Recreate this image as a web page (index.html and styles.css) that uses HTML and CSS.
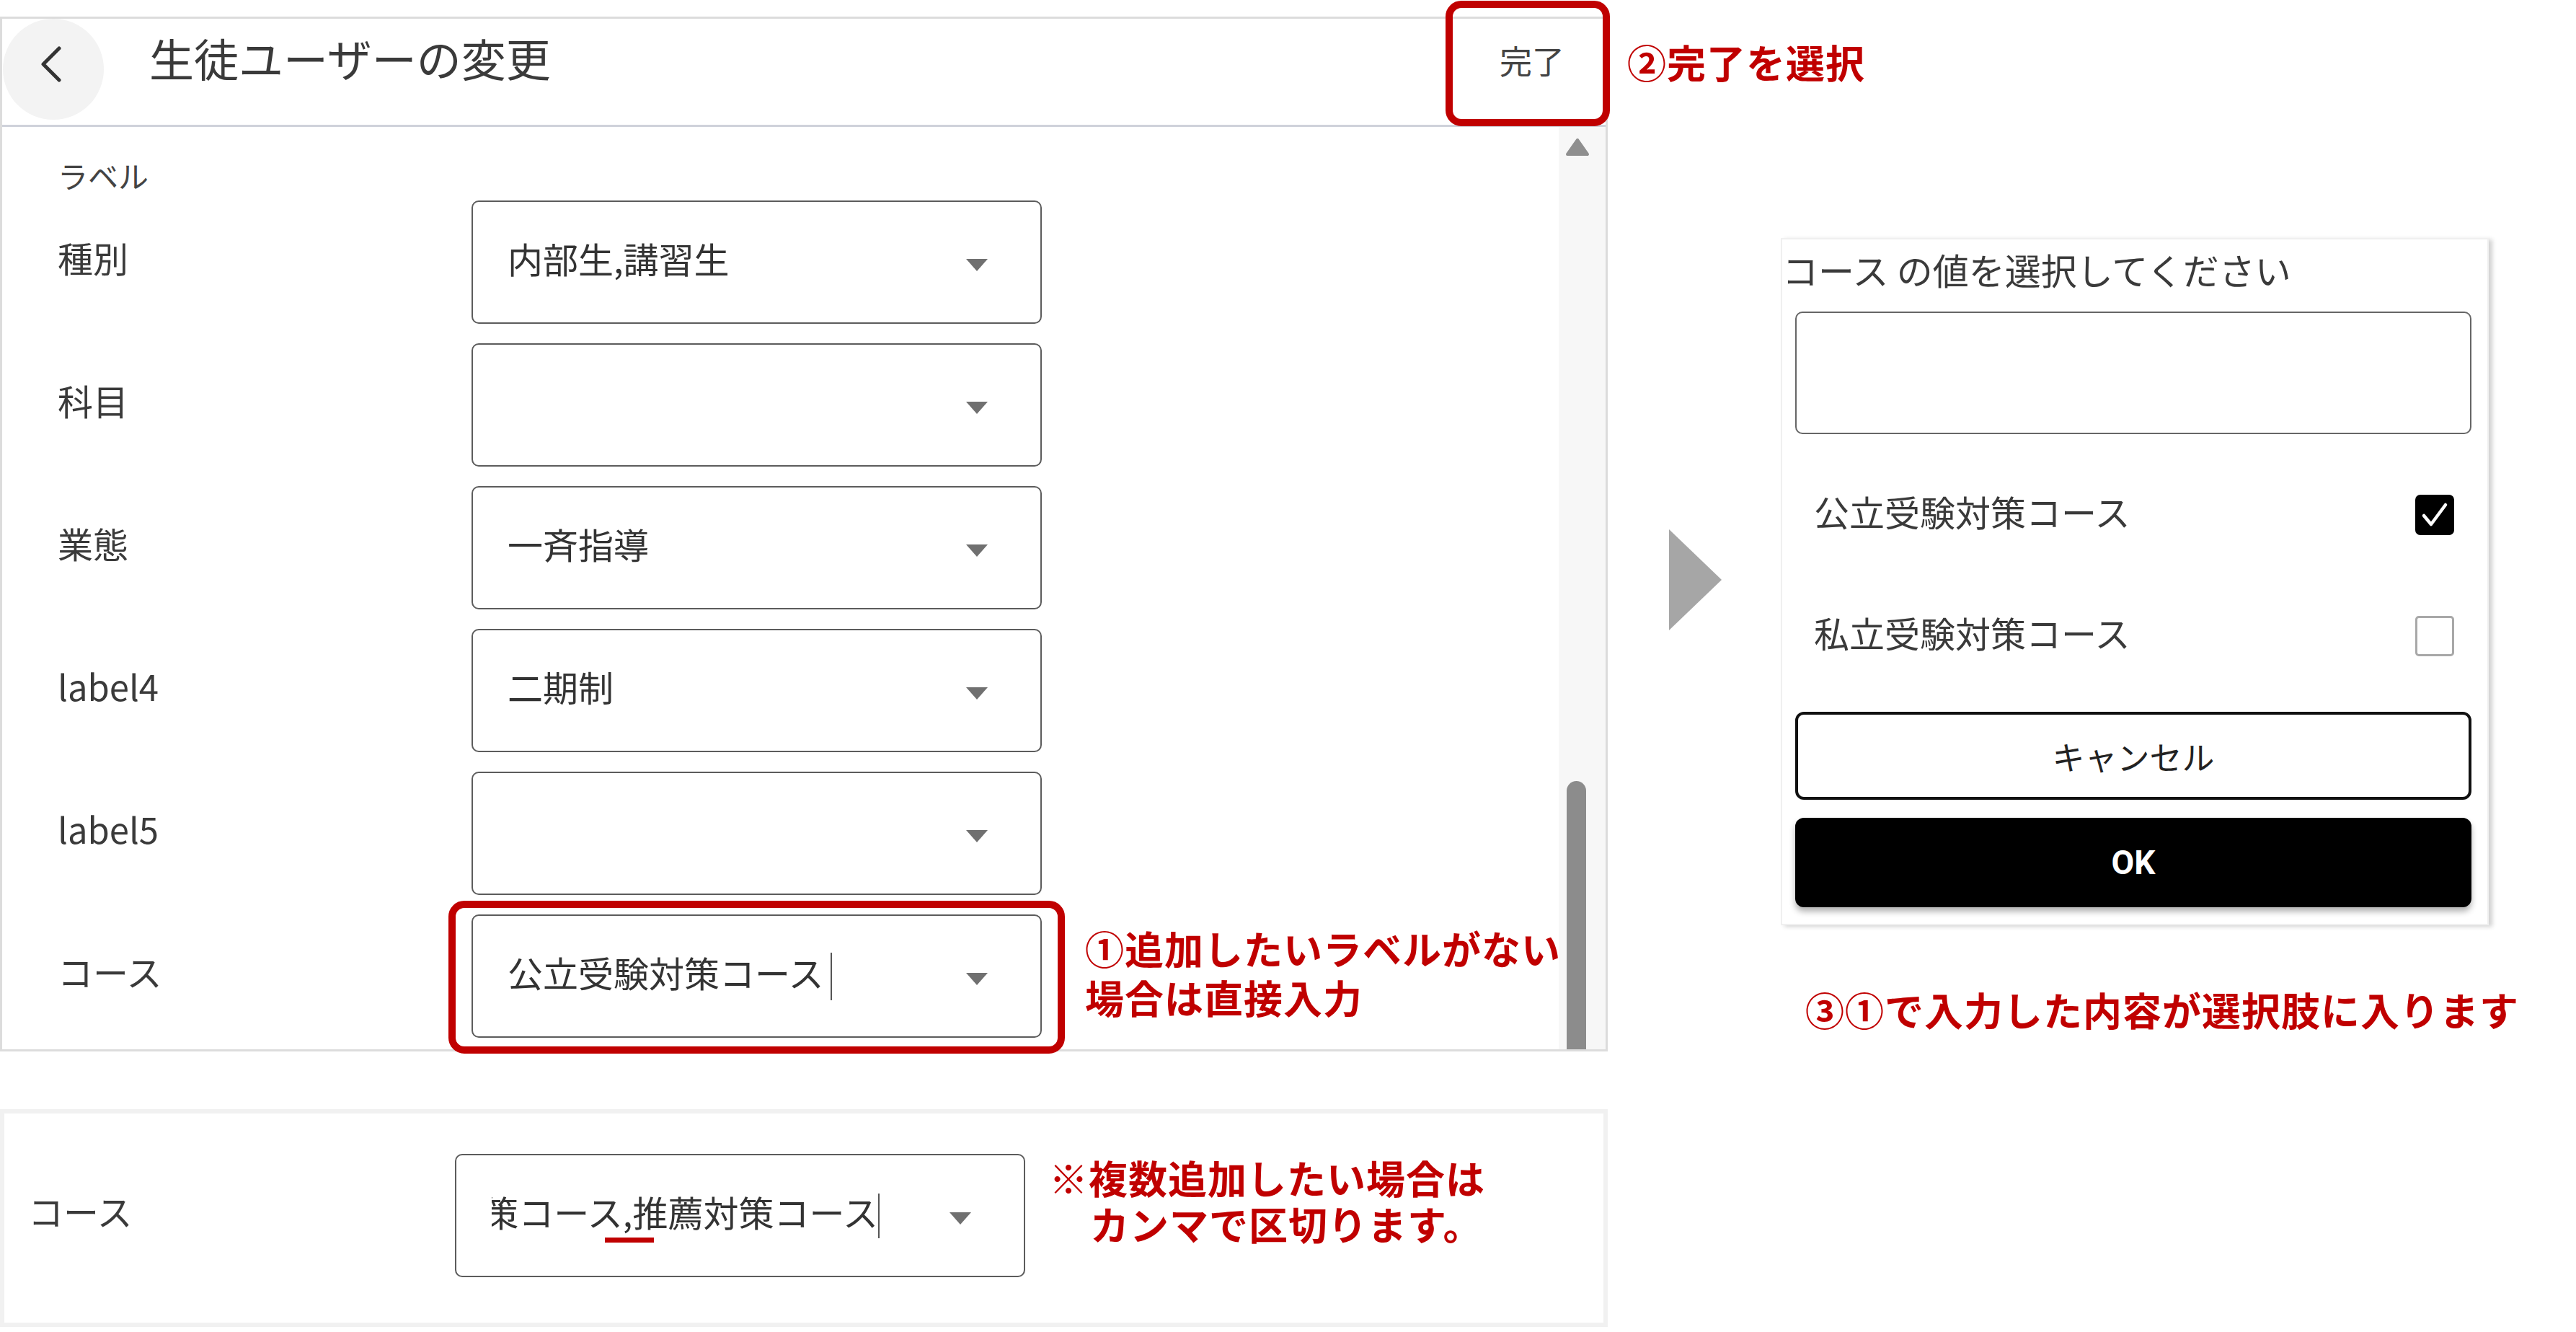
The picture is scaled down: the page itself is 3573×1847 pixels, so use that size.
FILE: index.html
```html
<!DOCTYPE html>
<html lang="ja">
<head>
  <meta charset="UTF-8" />
  <meta name="viewport" content="width=device-width, initial-scale=1.0" />
  <title>生徒ユーザーの変更</title>
  <link rel="stylesheet" href="styles.css">
</head>
<body>
  <div class="page">
    <div class="left">
      <section class="phone">
        <header class="app-bar">
          <div class="back">
            <svg width="32" height="50" viewBox="0 0 32 50"><polyline points="27,3 5,25 27,47" fill="none" stroke="#333" stroke-width="5" stroke-linecap="round" stroke-linejoin="round"/></svg>
          </div>
          <h1 class="app-title">生徒ユーザーの変更</h1>
          <span class="done">完了</span>
        </header>
        <div class="app-body">
          <div class="form">
            <div class="group-title">ラベル</div>
            <div class="field">
              <span class="field-label">種別</span>
              <div class="select"><span class="value">内部生,講習生</span><span class="caret"></span></div>
            </div>
            <div class="field">
              <span class="field-label">科目</span>
              <div class="select"><span class="value"></span><span class="caret"></span></div>
            </div>
            <div class="field">
              <span class="field-label">業態</span>
              <div class="select"><span class="value">一斉指導</span><span class="caret"></span></div>
            </div>
            <div class="field">
              <span class="field-label">label4</span>
              <div class="select"><span class="value">二期制</span><span class="caret"></span></div>
            </div>
            <div class="field">
              <span class="field-label">label5</span>
              <div class="select"><span class="value"></span><span class="caret"></span></div>
            </div>
            <div class="field">
              <span class="field-label">コース</span>
              <div class="select"><span class="value">公立受験対策コース<i class="cursor"></i></span><span class="caret"></span></div>
            </div>
          </div>
          <div class="scrollbar">
            <svg class="scroll-up" width="34" height="26" viewBox="0 0 34 26"><polygon points="17,3 31,23 3,23" fill="#8f8f8f" stroke="#8f8f8f" stroke-width="4" stroke-linejoin="round"/></svg>
            <span class="scroll-thumb"></span>
          </div>
        </div>
      </section>

      <section class="phone phone-strip">
        <div class="field">
          <span class="field-label">コース</span>
          <div class="select">
            <span class="value value-tail"><span>公立受験対策コース,推薦対策コース</span><i class="cursor cursor-short"></i></span>
            <span class="caret"></span>
            <span class="ime-mark"></span>
          </div>
        </div>
      </section>

      <div class="callout-box callout-done"></div>
      <div class="callout-box callout-course"></div>
      <p class="note note-done">②完了を選択</p>
      <p class="note note-input">①追加したいラベルがない<br>場合は直接入力</p>
      <p class="note note-multi"><span>※複数追加したい場合は</span><span class="indent">カンマで区切ります。</span></p>
    </div>

    <div class="flow-arrow"></div>

    <div class="right">
      <div class="dialog">
        <div class="dialog-title">コース の値を選択してください</div>
        <div class="dialog-input"></div>
        <ul class="options">
          <li class="option">
            <span>公立受験対策コース</span>
            <span class="check checked">
              <svg width="54" height="56" viewBox="0 0 54 56"><polyline points="12,29 22,41 42,14" fill="none" stroke="#fff" stroke-width="4.5" stroke-linecap="round" stroke-linejoin="round"/></svg>
            </span>
          </li>
          <li class="option">
            <span>私立受験対策コース</span>
            <span class="check"></span>
          </li>
        </ul>
        <div class="btn btn-cancel">キャンセル</div>
        <div class="btn btn-ok">OK</div>
      </div>
      <p class="note note-result">③①で入力した内容が選択肢に入ります</p>
    </div>
  </div>
</body>
</html>
```

FILE: styles.css
```css
body {
  margin: 0;
  background: #fff;
  font-family: "Noto Sans CJK JP", "Noto Sans", sans-serif;
  color: #333;
}
.page {
  display: flex;
  align-items: flex-start;
  width: 3573px;
  height: 1847px;
  overflow: hidden;
}
.left {
  position: relative;
  flex: none;
  width: 2230px;
  padding-top: 23px;
}

/* app screen */
.phone {
  box-sizing: border-box;
  width: 2230px;
  height: 1435px;
  border: 3px solid #dcdcdc;
  background: #fff;
  display: flex;
  flex-direction: column;
}
.app-bar {
  display: flex;
  align-items: flex-start;
  height: 147px;
  flex: none;
  border-bottom: 3px solid #cfd2da;
}
.back {
  box-sizing: border-box;
  width: 140px;
  height: 140px;
  margin-left: 1px;
  border-radius: 50%;
  background: #f3f3f3;
  display: flex;
  align-items: center;
  justify-content: center;
  padding: 0 6px 14px 0;
}
.app-title {
  margin: 23px 0 0 63px;
  font-size: 62px;
  font-weight: 400;
  line-height: 1;
  color: #3a3a3a;
}
.done {
  margin: 35px 57px 0 auto;
  font-size: 45px;
  line-height: 1;
  color: #444;
}
.app-body {
  flex: 1;
  display: flex;
  min-height: 0;
}
.form {
  flex: 1;
  display: flex;
  flex-direction: column;
  gap: 27px;
  padding: 46px 0 0 77px;
}
.group-title {
  font-size: 42px;
  line-height: 1;
  color: #444;
  margin-bottom: -13px;
}
.field {
  display: flex;
  align-items: center;
}
.field-label {
  flex: none;
  width: 574px;
  margin-top: -14px;
  font-size: 49px;
  line-height: 1;
  color: #3a3a3a;
}
.select {
  position: relative;
  box-sizing: border-box;
  flex: none;
  width: 791px;
  height: 171px;
  border: 2px solid #5c5c5c;
  border-radius: 10px;
  display: flex;
  align-items: center;
  padding: 0 73px 0 48px;
}
.value {
  flex: 1;
  margin-top: -12px;
  font-size: 49px;
  line-height: 1;
  color: #333;
  white-space: nowrap;
  display: flex;
  align-items: center;
}
.cursor {
  display: inline-block;
  width: 2px;
  height: 66px;
  margin: 12px 0 0 9px;
  background: #555;
}
.caret {
  flex: none;
  margin: 8px 0 0 auto;
  border-left: 15px solid transparent;
  border-right: 15px solid transparent;
  border-top: 17px solid #707070;
}
.scrollbar {
  flex: none;
  width: 65px;
  background: #f7f7f7;
  display: flex;
  flex-direction: column;
}
.scroll-up {
  margin: 15px 0 0 9px;
}
.scroll-thumb {
  margin: auto 0 0 11px;
  width: 27px;
  height: 372px;
  border-radius: 14px 14px 0 0;
  background: #8c8c8c;
}

/* second capture: comma separated input */
.phone-strip {
  margin-top: 80px;
  height: 302px;
  border: 6px solid #f1f1f1;
  justify-content: center;
  padding: 0 0 7px 33px;
}
.phone-strip .field-label {
  width: 592px;
}
.phone-strip .select {
  padding-left: 49px;
}
.value-tail {
  flex: none;
  width: 538px;
  overflow: hidden;
  justify-content: flex-end;
}
.value-tail span {
  flex: none;
}
.cursor-short {
  flex: none;
  height: 62px;
  margin-left: 0;
}
.ime-mark {
  position: absolute;
  left: 206px;
  top: 114px;
  width: 68px;
  height: 7px;
  background: #c00000;
}

/* red annotations */
.callout-box {
  position: absolute;
  box-sizing: border-box;
  border: 10px solid #c00000;
  border-radius: 22px;
}
.callout-done {
  left: 2005px;
  top: 1px;
  width: 228px;
  height: 174px;
}
.callout-course {
  left: 622px;
  top: 1249px;
  width: 855px;
  height: 212px;
}
.note {
  margin: 0;
  font-size: 54px;
  font-weight: 700;
  line-height: 68px;
  letter-spacing: 1px;
  color: #c00000;
  white-space: nowrap;
}
.left .note {
  position: absolute;
}
.note-done {
  left: 2257px;
  top: 52px;
}
.note-input {
  left: 1505px;
  top: 1281px;
}
.note-multi {
  left: 1455px;
  top: 1601px;
  line-height: 64px;
}
.note-multi span {
  display: block;
}
.note-multi .indent {
  margin-left: 57px;
}
.note-result {
  margin: 83px 0 0 34px;
}

.flow-arrow {
  flex: none;
  margin: 734px 0 0 85px;
  width: 0;
  height: 0;
  border-top: 70px solid transparent;
  border-bottom: 70px solid transparent;
  border-left: 73px solid #a6a6a6;
}

/* value picker dialog */
.right {
  flex: none;
  margin: 330px 0 0 82px;
  width: 982px;
}
.dialog {
  box-sizing: border-box;
  width: 982px;
  padding: 16px 22px 23px 18px;
  border: 2px solid #f0f0f0;
  background: #fff;
  box-shadow: 5px 2px 6px rgba(0, 0, 0, 0.18);
}
.dialog-title {
  margin-left: -18px;
  font-size: 50px;
  line-height: 1;
  color: #3a3a3a;
  white-space: nowrap;
}
.dialog-input {
  margin-top: 34px;
  box-sizing: border-box;
  height: 170px;
  border: 2px solid #666;
  border-radius: 10px;
}
.options {
  list-style: none;
  margin: 26px 0 0;
  padding: 0;
}
.option {
  height: 168px;
  display: flex;
  align-items: center;
  justify-content: space-between;
  padding: 0 24px 0 26px;
  font-size: 49px;
  line-height: 1;
  color: #3a3a3a;
}
.option > span:first-child {
  margin-top: -8px;
}
.check {
  box-sizing: border-box;
  width: 54px;
  height: 56px;
  border: 3px solid #a8a8a8;
  border-radius: 5px;
  margin-top: 4px;
}
.check.checked {
  border: none;
  border-radius: 7px;
  background: #000;
}
.check svg {
  display: block;
}
.btn {
  box-sizing: border-box;
  display: flex;
  align-items: center;
  justify-content: center;
  border-radius: 12px;
  line-height: 1;
}
.btn-cancel {
  margin-top: 23px;
  height: 122px;
  border: 4px solid #111;
  font-size: 45px;
  color: #222;
}
.btn-ok {
  margin-top: 25px;
  height: 124px;
  background: #000;
  color: #fff;
  font-family: Roboto, "Noto Sans", sans-serif;
  font-weight: 700;
  font-size: 46px;
  box-shadow: 0 6px 8px rgba(0, 0, 0, 0.3);
}
```
